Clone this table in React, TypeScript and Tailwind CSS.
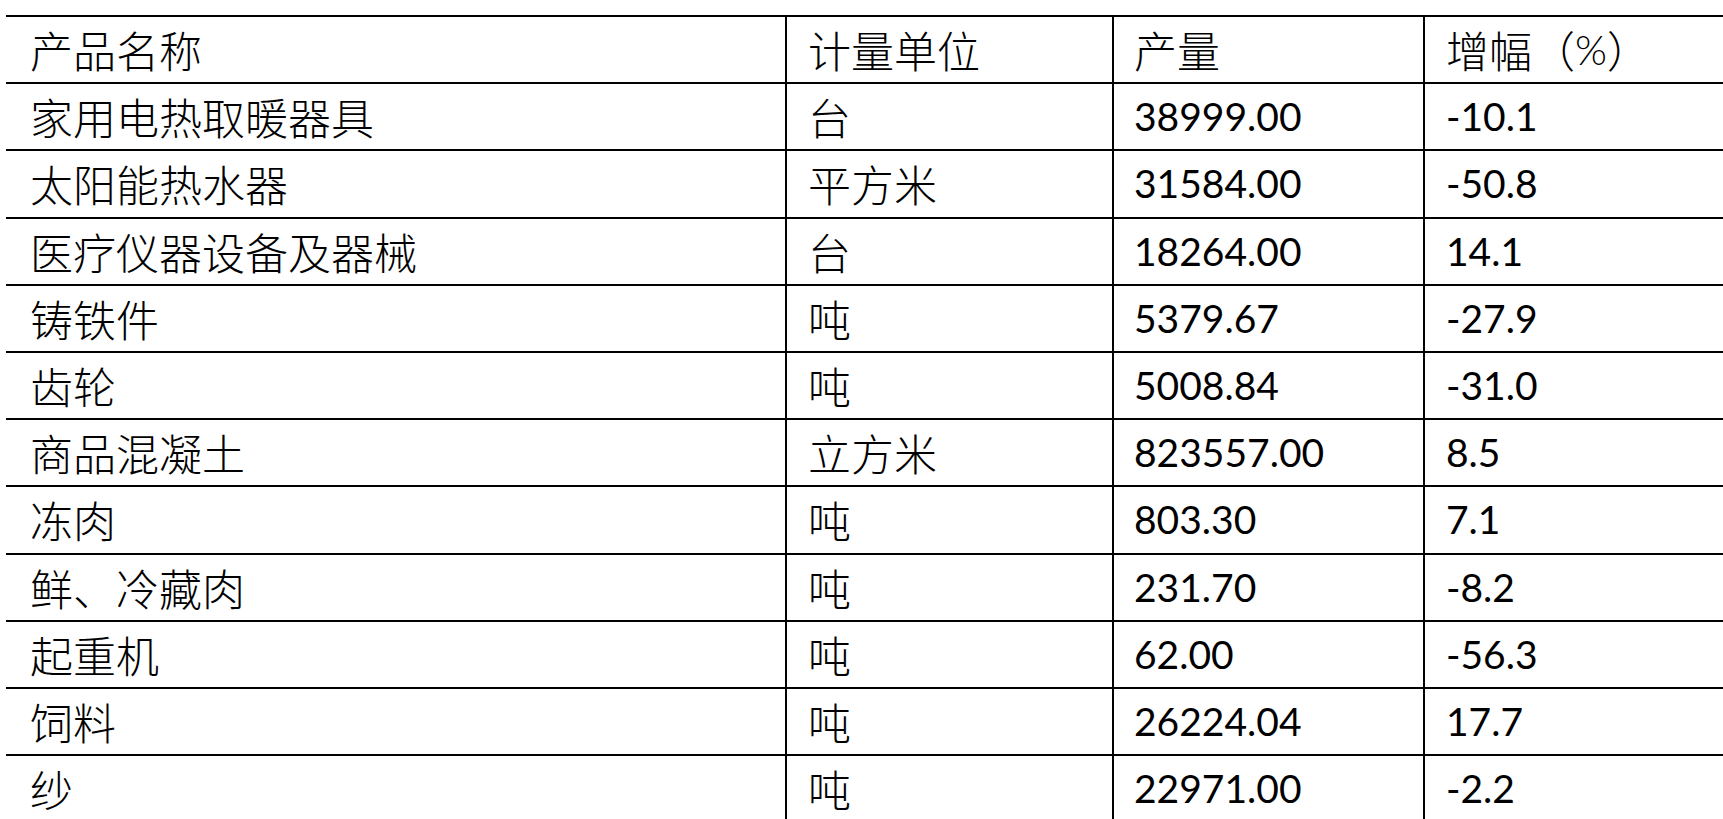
import React from "react";

const rows: [string, string, string, string][] = [
  ["家用电热取暖器具", "台", "38999.00", "-10.1"],
  ["太阳能热水器", "平方米", "31584.00", "-50.8"],
  ["医疗仪器设备及器械", "台", "18264.00", "14.1"],
  ["铸铁件", "吨", "5379.67", "-27.9"],
  ["齿轮", "吨", "5008.84", "-31.0"],
  ["商品混凝土", "立方米", "823557.00", "8.5"],
  ["冻肉", "吨", "803.30", "7.1"],
  ["鲜、冷藏肉", "吨", "231.70", "-8.2"],
  ["起重机", "吨", "62.00", "-56.3"],
  ["饲料", "吨", "26224.04", "17.7"],
  ["纱", "吨", "22971.00", "-2.2"],
];

const cjk = "font-['Noto_Sans_CJK_SC',sans-serif] text-[43px] font-light leading-none";
const num = "font-['Lato','Liberation_Sans',sans-serif] text-[39px] leading-none";

function Row({ cells, header }: { cells: [string, string, string, string]; header?: boolean }) {
  return (
    <div className="grid grid-cols-[779px_327px_311px_1fr] h-[67.2px] border-b-2 border-black">
      <div className={`flex items-center pl-[24px] ${cjk}`}>{cells[0]}</div>
      <div className={`flex items-center pl-[21px] border-l-2 border-black ${cjk}`}>{cells[1]}</div>
      <div className={`flex items-center pl-[20px] border-l-2 border-black ${header ? cjk : num}`}>{cells[2]}</div>
      <div className={`flex items-center pl-[21px] border-l-2 border-black ${header ? cjk : num}`}>
        {header ? (
          <>
            增幅（<span className="font-['Lato','Liberation_Sans',sans-serif] text-[41px] leading-none">%</span>）
          </>
        ) : (
          cells[3]
        )}
      </div>
    </div>
  );
}

export default function App() {
  return (
    <div className="w-[1723px] h-[819px] overflow-hidden bg-white text-black">
      <div className="ml-[6px] mt-[15px] border-t-2 border-black">
        <Row cells={["产品名称", "计量单位", "产量", "增幅（%）"]} header />
        {rows.map((r, i) => (
          <Row key={i} cells={r} />
        ))}
      </div>
    </div>
  );
}
